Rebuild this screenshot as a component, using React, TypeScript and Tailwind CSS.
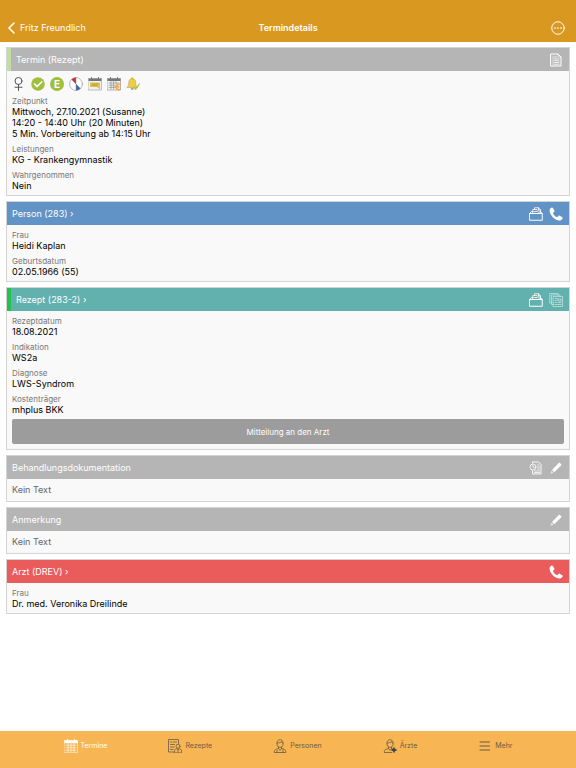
import type { ReactNode, SVGProps } from "react";
import { clsx } from "clsx";

type IconProps = SVGProps<SVGSVGElement>;

function Icon({ children, className = "size-3.5", viewBox = "0 0 28 28", ...rest }: IconProps) {
  return (
    <svg
      viewBox={viewBox}
      className={clsx("shrink-0", className)}
      fill="none"
      stroke="currentColor"
      strokeWidth={1.6}
      strokeLinecap="round"
      strokeLinejoin="round"
      aria-hidden="true"
      {...rest}
    >
      {children}
    </svg>
  );
}

/* Status icons */

function FemaleIcon() {
  return (
    <Icon className="size-3.5 text-[#555555]" strokeWidth={2}>
      <circle cx="13" cy="8" r="7" />
      <path d="M13 15v12M6 20.500h14" />
    </Icon>
  );
}

function CheckBadge() {
  return (
    <Icon stroke="none">
      <circle cx="14" cy="14" r="13.5" fill="#9fc03c" />
      <path d="M7 14l5 5 9.500-9" stroke="#fff" strokeWidth="3.4" />
    </Icon>
  );
}

function LetterBadge() {
  return (
    <span className="flex size-3.5 items-center justify-center rounded-full bg-[#9fc03c] text-[10px] font-bold leading-none text-white">
      E
    </span>
  );
}

function PieIcon() {
  return (
    <Icon stroke="none">
      <circle cx="14" cy="14" r="12.8" fill="#fff" stroke="#8a8a8a" strokeWidth="1.2" />
      <path d="M14 14V1.200A12.800 12.800 0 0 0 5 5z" fill="#c8323c" />
      <path d="M14 14v12.800A12.800 12.800 0 0 0 23 23z" fill="#3c6cae" />
      <path d="M14 1.200v25.600M5 5l18 18" stroke="#8a8a8a" strokeWidth="1" />
    </Icon>
  );
}

function CalendarNoteIcon() {
  return (
    <Icon stroke="none">
      <path d="M1 3h26v23H1z" fill="#f2f2f2" stroke="#999" strokeWidth="1.2" />
      <path d="M1 3h26v5H1z" fill="#777" />
      <path d="M7 1v4M21 1v4" stroke="#777" strokeWidth="2" />
      <path d="M4 11h20v14l-6-5H4z" fill="#e0c44c" />
      <path d="M8 14h12M8 17h10" stroke="#a88f2c" strokeWidth="1.2" />
    </Icon>
  );
}

function CalendarEuroIcon() {
  return (
    <Icon stroke="none">
      <path d="M1 3h26v23H1z" fill="#f4f4f4" stroke="#888" strokeWidth="1.2" />
      <path d="M1 3h26v5H1z" fill="#777" />
      <path d="M7 1v4M21 1v4" stroke="#777" strokeWidth="2" />
      <path d="M4 12h20M4 16.5h12M4 21h11M8 9v15M13 9v15M18 9v5" stroke="#8d8d8d" strokeWidth="1.3" />
      <path d="M26.500 14.500a5.800 5.800 0 1 0 0 10.500M16 18.300h8M16 21.500h8" stroke="#eea03c" strokeWidth="2.4" />
    </Icon>
  );
}

function BellCheckIcon() {
  return (
    <Icon stroke="none">
      <path
        d="M12.5 3c-5 0-7 4-7 8.500 0 5-1.500 7.500-4 9.500h22c-2.500-2-4-4.500-4-9.500C19.500 7 17.500 3 12.500 3z"
        fill="#f3cb45"
        stroke="#a89a68"
        strokeWidth="1"
      />
      <circle cx="12.5" cy="2.5" r="1.8" fill="#d9ad35" />
      <path d="M9.500 22.500a3 3 0 0 0 6 0z" fill="#8c8468" />
      <path d="M16 20l3.500 4.500L26.500 14" stroke="#9fc93c" strokeWidth="2.6" />
    </Icon>
  );
}

/* Header icons */

function DocumentIcon() {
  return (
    <Icon>
      <path d="M4 2h14l6 6v18H4z" strokeWidth="2" />
      <path d="M18 2v6h6M8 6v18" strokeWidth="1.2" />
      <path d="M11 8h4M11 12h9M11 15.5h9M11 19h9M11 22.5h9" strokeWidth="1.6" />
    </Icon>
  );
}

function FolderIcon() {
  return (
    <Icon>
      <path d="M1.500 13h25v13.500h-25z" strokeWidth="2" />
      <path d="M1.500 13L5 9h3M26.500 13L23 9" strokeWidth="1.8" />
      <path d="M7.500 12.500V5H11V1.500h8L23 6v6.500M11 5h5l4 4v3.500M10.500 9h6M19 1.500V6h4" />
    </Icon>
  );
}

function PhoneIcon() {
  return (
    <Icon stroke="none">
      <path
        d="M1.300 5.500C2 3.300 4.200 1.400 5.800 1c.9-.2 1.400.2 1.900 1l3 5.200c.5.9.4 1.700-.4 2.400L8.300 11.300c-.5.500-.5 1-.2 1.600 1.500 3 4.300 5.700 7.300 7.200.6.300 1.100.2 1.600-.2l2-2c.7-.8 1.500-.9 2.400-.4l5 3c.9.500 1.200 1.100.9 2-.7 2-2.400 3.700-4.400 4.300C12.600 28.700 0 15 1.300 5.500z"
        fill="currentColor"
      />
    </Icon>
  );
}

function PagesIcon() {
  return (
    <Icon className="size-3.5 opacity-70" strokeWidth={1.4}>
      <path d="M9 7h18v20H9zM9 23H5V4h17v3M5 20H1.500V1H18v3" />
      <path d="M12 11h5M12 15h4M12 19h3M12 23h12M19 12h5v4h-5zM18 19h6" />
    </Icon>
  );
}

function HistoryDocIcon() {
  return (
    <Icon>
      <path d="M7 4V2h12l5 5v19H7v-7" strokeWidth="1.8" />
      <circle cx="8" cy="12" r="6" />
      <path d="M8 8.500V12l3 1.500M17 8h3M17 12h4M17 16h4M11 20h10M11 23h10" strokeWidth="1.6" />
    </Icon>
  );
}

function PencilIcon() {
  return (
    <Icon stroke="none" fill="currentColor">
      <path d="M22 4.200l2.300 2.300c.8.800.8 1.600 0 2.400L10.500 22.500l-4.500-4.500L19.600 4.200c.8-.8 1.600-.8 2.400 0z" />
      <path d="M5 19.500l4 4L2.500 25.500z" opacity="0.7" />
    </Icon>
  );
}

/* Tab icons */

function CalendarTabIcon() {
  return (
    <Icon strokeWidth={1}>
      <path d="M1 3h26v24H1z" />
      <path d="M1 3h26v5H1z" fill="currentColor" />
      <path d="M7 1v3M21 1v3" strokeWidth="2" />
      <path d="M4 12.5h20M4 17.5h20M4 22.5h20M8 10v15M14 10v15M20 10v15" strokeWidth="1.2" />
    </Icon>
  );
}

function PrescriptionTabIcon() {
  return (
    <Icon>
      <path d="M12 26H1V1h20v8M5 6h3M11 6h6M5 11h8M5 16h7M5 21h5" />
      <circle cx="20" cy="14.5" r="4" />
      <path d="M13 27v-4c0-2 3-3 4.500-3.500l2.500 2 2.500-2c1.500.500 4.500 1.500 4.500 3.500v4zM20 22v5" />
    </Icon>
  );
}

function PersonTabIcon({ plus = false }: { plus?: boolean }) {
  return (
    <Icon>
      <path d="M8 8c0-9 12-9 12 0v3c0 8-12 8-12 0zM8 8c4 0 8-1 9-3 0 2 1 3 3 3" />
      <path d="M11 16v3l-6 2c-2 .7-2.500 3-2.500 6h15M17 16v3l3 1M11 19l3 4 3-4" />
      {plus ? (
        <path d="M22 17v10M17 22h10" stroke="#3f4650" strokeWidth="3.6" strokeLinecap="butt" />
      ) : (
        <path d="M20 20l3 1c2 .7 2.500 3 2.500 6h-8M8 23v4M20 23v4" />
      )}
    </Icon>
  );
}

function MenuTabIcon() {
  return (
    <Icon>
      <path d="M4 6h19M4 14h19M4 22h19" strokeWidth="2" />
    </Icon>
  );
}

type CardProps = {
  title: string;
  color: string;
  stripe?: string;
  linked?: boolean;
  actions?: { label: string; icon: ReactNode }[];
  children: ReactNode;
};

function Card({ title, color, stripe, linked, actions = [], children }: CardProps) {
  return (
    <section className="border border-[#d4d4d4] bg-[#f9f9f9]">
      <header className={clsx("flex h-[23px] items-center pr-1.5 text-white", color)}>
        {stripe && <span className={clsx("h-full w-1", stripe)} />}
        <h2 className="flex-1 pl-[5px] text-[9px] leading-3">
          {linked ? <a href="#">{title} ›</a> : title}
        </h2>
        <div className="flex gap-1.5">
          {actions.map((a) => (
            <button key={a.label} type="button" aria-label={a.label}>
              {a.icon}
            </button>
          ))}
        </div>
      </header>
      {children}
    </section>
  );
}

function Fields({ children }: { children: ReactNode }) {
  return <dl className="flex flex-col gap-[5px] px-[5px] pb-1 pt-[5px]">{children}</dl>;
}

function Field({ label, lines }: { label: string; lines: string[] }) {
  return (
    <div>
      <dt className="text-[8px] leading-[10px] text-[#777777]">{label}</dt>
      {lines.map((line) => (
        <dd key={line} className="text-[9px] leading-[11px] text-black">
          {line}
        </dd>
      ))}
    </div>
  );
}

function EmptyText() {
  return <p className="px-[5px] text-[9px] leading-[22px] text-[#666666]">Kein Text</p>;
}

const tabs = [
  { label: "Termine", icon: <CalendarTabIcon />, active: true },
  { label: "Rezepte", icon: <PrescriptionTabIcon /> },
  { label: "Personen", icon: <PersonTabIcon /> },
  { label: "Ärzte", icon: <PersonTabIcon plus /> },
  { label: "Mehr", icon: <MenuTabIcon /> },
];

export default function App() {
  return (
    <div className="flex min-h-screen flex-col bg-white font-['Inter','Liberation_Sans',sans-serif]">
      <header className="grid grid-cols-3 items-center bg-[#d99820] px-2 pb-[7px] pt-5 text-[9px] leading-[15px] text-white">
        <a href="#" className="flex items-center gap-1">
          <Icon className="h-3 w-2" viewBox="0 0 16 24" strokeWidth={3}>
            <path d="M12 2L2 12l10 10" />
          </Icon>
          Fritz Freundlich
        </a>
        <h1 className="text-center font-semibold">Termindetails</h1>
        <button type="button" aria-label="Optionen" className="mr-[3px] justify-self-end">
          <Icon>
            <circle cx="14" cy="14" r="12.5" strokeWidth="2" />
            <path d="M8 14h.01M14 14h.01M20 14h.01" strokeWidth="3.4" />
          </Icon>
        </button>
      </header>

      <main className="flex flex-1 flex-col gap-[5px] px-1.5 py-[5px]">
        <Card
          title="Termin (Rezept)"
          color="bg-[#b5b5b5]"
          stripe="bg-[#bfe0a2]"
          actions={[{ label: "Dokument", icon: <DocumentIcon /> }]}
        >
          <div className="flex gap-[5px] px-[5px] pt-1.5">
            <FemaleIcon />
            <CheckBadge />
            <LetterBadge />
            <PieIcon />
            <CalendarNoteIcon />
            <CalendarEuroIcon />
            <BellCheckIcon />
          </div>
          <Fields>
            <Field
              label="Zeitpunkt"
              lines={[
                "Mittwoch, 27.10.2021 (Susanne)",
                "14:20 - 14:40 Uhr (20 Minuten)",
                "5 Min. Vorbereitung ab 14:15 Uhr",
              ]}
            />
            <Field label="Leistungen" lines={["KG - Krankengymnastik"]} />
            <Field label="Wahrgenommen" lines={["Nein"]} />
          </Fields>
        </Card>

        <Card
          title="Person (283)"
          color="bg-[#6193c6]"
          linked
          actions={[
            { label: "Akte", icon: <FolderIcon /> },
            { label: "Anrufen", icon: <PhoneIcon /> },
          ]}
        >
          <Fields>
            <Field label="Frau" lines={["Heidi Kaplan"]} />
            <Field label="Geburtsdatum" lines={["02.05.1966 (55)"]} />
          </Fields>
        </Card>

        <Card
          title="Rezept (283-2)"
          color="bg-[#62b1af]"
          stripe="bg-[#22c04e]"
          linked
          actions={[
            { label: "Akte", icon: <FolderIcon /> },
            { label: "Dokumente", icon: <PagesIcon /> },
          ]}
        >
          <Fields>
            <Field label="Rezeptdatum" lines={["18.08.2021"]} />
            <Field label="Indikation" lines={["WS2a"]} />
            <Field label="Diagnose" lines={["LWS-Syndrom"]} />
            <Field label="Kostenträger" lines={["mhplus BKK"]} />
          </Fields>
          <div className="flex px-[5px] pb-[5px]">
            <button type="button" className="h-[25px] flex-1 rounded-xs bg-[#9c9c9c] text-[8px] text-white">
              Mitteilung an den Arzt
            </button>
          </div>
        </Card>

        <Card
          title="Behandlungsdokumentation"
          color="bg-[#b5b5b5]"
          actions={[
            { label: "Verlauf", icon: <HistoryDocIcon /> },
            { label: "Bearbeiten", icon: <PencilIcon /> },
          ]}
        >
          <EmptyText />
        </Card>

        <Card
          title="Anmerkung"
          color="bg-[#b5b5b5]"
          actions={[{ label: "Bearbeiten", icon: <PencilIcon /> }]}
        >
          <EmptyText />
        </Card>

        <Card
          title="Arzt (DREV)"
          color="bg-[#ea5c5c]"
          linked
          actions={[{ label: "Anrufen", icon: <PhoneIcon /> }]}
        >
          <Fields>
            <Field label="Frau" lines={["Dr. med. Veronika Dreilinde"]} />
          </Fields>
        </Card>
      </main>

      <nav className="sticky bottom-0 flex justify-center gap-[61px] bg-[#f7b653] pb-[15px] pt-2 text-[7px] leading-[14px]">
        {tabs.map((tab) => (
          <a
            key={tab.label}
            href="#"
            className={clsx("flex items-center gap-[3px]", tab.active ? "text-white" : "text-[#6b5b45]")}
          >
            {tab.icon}
            {tab.label}
          </a>
        ))}
      </nav>
    </div>
  );
}
